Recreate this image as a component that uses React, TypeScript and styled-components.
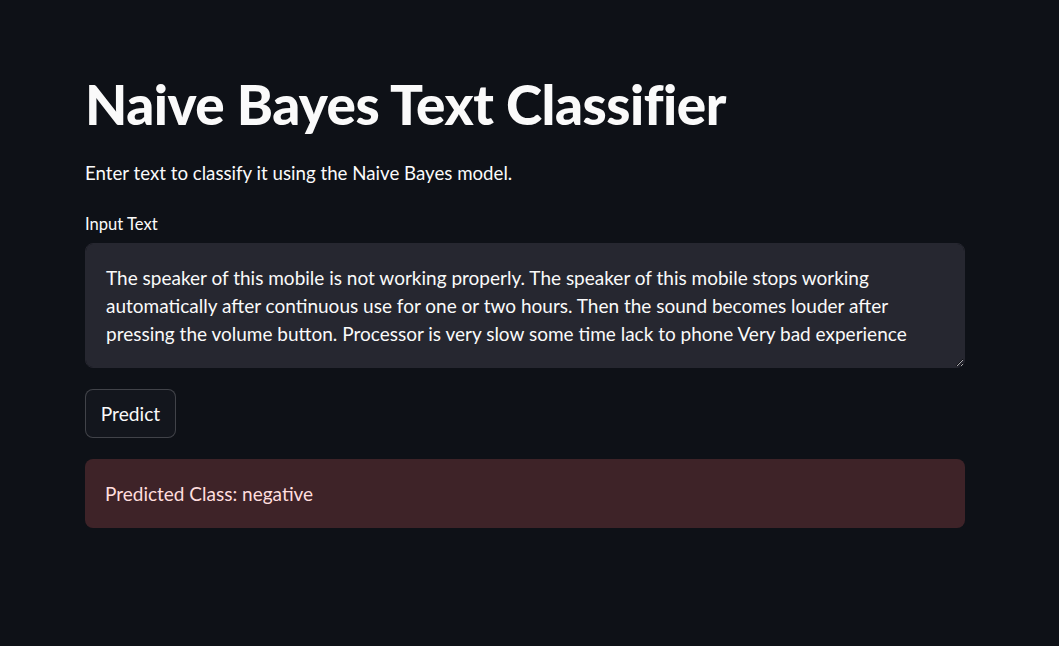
import React from "react";
import styled, { createGlobalStyle } from "styled-components";

const Global = createGlobalStyle`
  html, body { margin: 0; padding: 0; background: #0e1117; }
  body { font-family: Lato, "Noto Sans", sans-serif; color: #fafafa; }
`;

const Page = styled.main`
  min-height: 646px;
  box-sizing: border-box;
  padding: 68px 94px 0 85px;
  display: flex;
  flex-direction: column;
  width: 1059px;
`;

const Title = styled.h1`
  margin: 0;
  font-size: 54.8px;
  font-weight: 900;
  line-height: 72px;
  letter-spacing: -0.5px;
`;

const Subtitle = styled.p`
  margin: 20px 0 0;
  font-size: 18.7px;
  line-height: 26px;
`;

const Label = styled.label`
  margin-top: 28px;
  font-size: 16.6px;
  line-height: 20px;
`;

const TextArea = styled.textarea`
  margin-top: 9px;
  box-sizing: border-box;
  width: 880px;
  height: 125px;
  background: #262730;
  color: #fafafa;
  border: 1px solid #262730;
  border-radius: 8px;
  padding: 20px 20px;
  font-family: inherit;
  font-size: 19px;
  line-height: 28px;
  outline: none;
  resize: vertical;
`;

const Button = styled.button`
  margin-top: 21px;
  align-self: flex-start;
  box-sizing: border-box;
  height: 49px;
  width: 91px;
  padding: 0;
  background: #13161d;
  color: #fafafa;
  border: 1px solid rgba(250, 250, 250, 0.2);
  border-radius: 8px;
  font-family: inherit;
  font-size: 19.2px;
`;

const Alert = styled.div`
  margin-top: 21px;
  box-sizing: border-box;
  width: 880px;
  height: 69px;
  display: flex;
  align-items: center;
  padding: 0 20px;
  background: #3e2328;
  color: #ffdede;
  border-radius: 8px;
  font-size: 19px;
`;

const text =
  "The speaker of this mobile is not working properly. The speaker of this mobile stops working automatically after continuous use for one or two hours. Then the sound becomes louder after pressing the volume button. Processor is very slow some time lack to phone Very bad experience";

export default function App() {
  return (
    <>
      <Global />
      <Page>
        <Title>Naive Bayes Text Classifier</Title>
        <Subtitle>Enter text to classify it using the Naive Bayes model.</Subtitle>
        <Label>Input Text</Label>
        <TextArea defaultValue={text} />
        <Button>Predict</Button>
        <Alert>Predicted Class: negative</Alert>
      </Page>
    </>
  );
}
